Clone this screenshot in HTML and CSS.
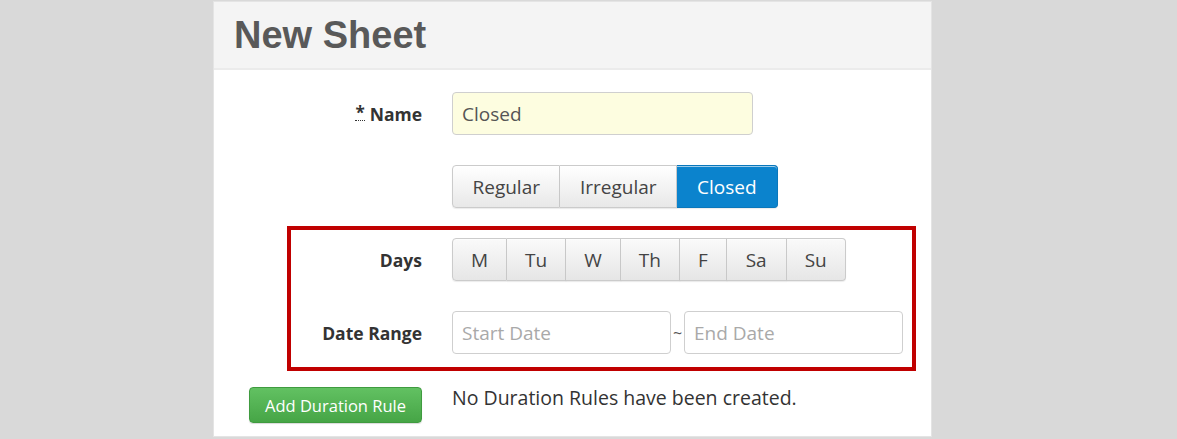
FILE: index.html
```html
<!DOCTYPE html>
<html>
<head>
<meta charset="utf-8">
<link rel="stylesheet" href="styles.css">
</head>
<body>
<div class="panel">
  <div class="panel-header"><h1>New Sheet</h1></div>
  <div class="panel-body">
    <div class="row row-first">
      <label class="label"><abbr title="required">*</abbr> Name</label>
      <input class="input input-name" type="text" value="Closed">
    </div>
    <div class="row">
      <div class="label"></div>
      <div class="btn-group">
        <button class="btn">Regular</button>
        <button class="btn">Irregular</button>
        <button class="btn btn-active">Closed</button>
      </div>
    </div>
    <div class="row">
      <label class="label">Days</label>
      <div class="btn-group">
        <button class="btn day">M</button>
        <button class="btn day">Tu</button>
        <button class="btn day">W</button>
        <button class="btn day">Th</button>
        <button class="btn day">F</button>
        <button class="btn day day-sa">Sa</button>
        <button class="btn day">Su</button>
      </div>
    </div>
    <div class="row">
      <label class="label">Date Range</label>
      <div class="range">
        <input class="input input-date" type="text" placeholder="Start Date">
        <span class="tilde">~</span>
        <input class="input input-date" type="text" placeholder="End Date">
      </div>
    </div>
    <div class="row row-last">
      <div class="label"><button class="btn-success">Add Duration Rule</button></div>
      <p class="empty">No Duration Rules have been created.</p>
    </div>
    <div class="highlight"></div>
  </div>
</div>
</body>
</html>
```

FILE: styles.css
```css
html, body {
  margin: 0;
  padding: 0;
  background: #d9d9d9;
  font-family: "Open Sans", "Liberation Sans", sans-serif;
  color: #333;
}
body {
  padding-top: 1px;
}
.panel {
  margin-left: 213px;
  width: 719px;
  background: #fff;
  border: 1px solid #e4e4e4;
  height: 436px;
  box-sizing: border-box;
}
.panel-header {
  background: #f4f4f4;
  border-bottom: 2px solid #ebebeb;
  height: 68px;
  box-sizing: border-box;
  padding-left: 20px;
  display: flex;
  align-items: center;
}
.panel-header h1 {
  margin: 0;
  font-family: "Liberation Sans", Arial, sans-serif;
  font-weight: bold;
  font-size: 38px;
  color: #595959;
}
.panel-body {
  position: relative;
  padding-top: 22px;
}
.row {
  display: flex;
  align-items: center;
  margin-bottom: 30px;
}
.row-last {
  align-items: flex-start;
  margin-top: 33px;
  margin-bottom: 0;
}
.label {
  width: 208px;
  flex: none;
  box-sizing: border-box;
  text-align: right;
  margin-right: 30px;
  font-weight: bold;
  font-size: 17.5px;
  color: #333;
  display: flex;
  justify-content: flex-end;
  align-items: center;
  gap: 5px;
}
.label abbr {
  text-decoration: none;
  border-bottom: 1px dotted #333;
  line-height: 14px;
  font-size: 17px;
}
.input {
  height: 43px;
  box-sizing: border-box;
  border: 1px solid #cfcfcf;
  border-radius: 4px;
  padding: 0 9px;
  font-family: "Open Sans", "Liberation Sans", sans-serif;
  font-size: 19px;
  color: #555;
  background: #fff;
  outline: none;
}
.input-name {
  width: 301px;
  background: #fdfde0;
}
.input::placeholder {
  color: #a9a9a9;
}
.input-date {
  width: 219px;
}
.range {
  display: flex;
  align-items: center;
}
.tilde {
  width: 13px;
  text-align: center;
  font-size: 16px;
  color: #555;
}
.btn-group {
  display: flex;
}
.btn {
  height: 43px;
  box-sizing: border-box;
  font-family: "Open Sans", "Liberation Sans", sans-serif;
  font-size: 19px;
  color: #444;
  padding: 0 19.5px;
  background: linear-gradient(#ffffff, #e8e8e8);
  border: 1px solid #cbcbcb;
  border-left-width: 0;
  box-shadow: inset 0 1px 0 rgba(255,255,255,0.6), 0 1px 1px rgba(0,0,0,0.08);
  margin: 0;
}
.btn:first-child {
  border-left-width: 1px;
  border-radius: 4px 0 0 4px;
}
.btn:last-child {
  border-radius: 0 4px 4px 0;
}
.btn-active {
  background: #0b83cd;
  border-color: #0a77bb;
  color: #fff;
  padding: 0 20px;
}
.day {
  padding: 0 18px;
  background: linear-gradient(#fafafa, #e6e6e6);
}
.day-sa {
  padding: 0 19px;
}
.btn-success {
  width: 173px;
  height: 36px;
  border-radius: 4px;
  border: 1px solid #3f9b3f;
  background: linear-gradient(#62c162, #46a546);
  color: #fff;
  font-family: "Open Sans", "Liberation Sans", sans-serif;
  font-size: 16.5px;
  padding: 0;
  box-shadow: 0 1px 1px rgba(0,0,0,0.15);
}
.empty {
  margin: 0;
  font-size: 19.5px;
  line-height: 22px;
  color: #333;
}
.highlight {
  position: absolute;
  left: 73px;
  top: 156px;
  width: 629px;
  height: 145px;
  box-sizing: border-box;
  border: 4px solid #c00000;
  pointer-events: none;
}
```
